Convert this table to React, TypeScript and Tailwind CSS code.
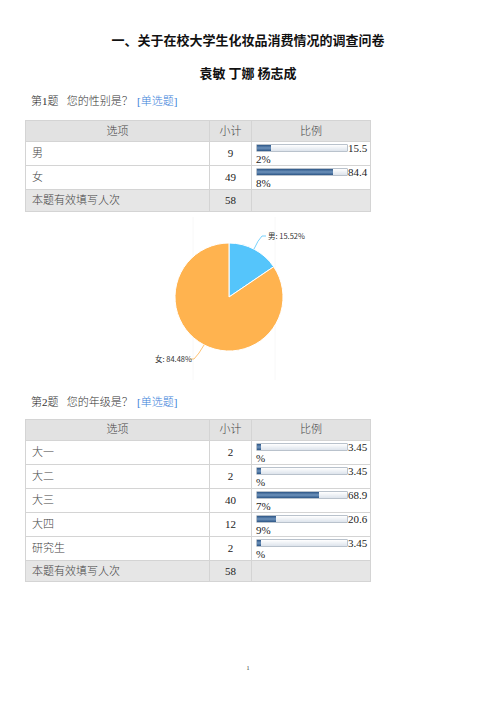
import React from 'react';

type Row = { label: string; count: number; pct: number; l1: string; l2: string };

const q1: Row[] = [
  { label: '男', count: 9, pct: 15.52, l1: '15.5', l2: '2%' },
  { label: '女', count: 49, pct: 84.48, l1: '84.4', l2: '8%' },
];

const q2: Row[] = [
  { label: '大一', count: 2, pct: 3.45, l1: '3.45', l2: '%' },
  { label: '大二', count: 2, pct: 3.45, l1: '3.45', l2: '%' },
  { label: '大三', count: 40, pct: 68.97, l1: '68.9', l2: '7%' },
  { label: '大四', count: 12, pct: 20.69, l1: '20.6', l2: '9%' },
  { label: '研究生', count: 2, pct: 3.45, l1: '3.45', l2: '%' },
];

const serif = { fontFamily: '"Liberation Serif", "Noto Sans CJK SC", serif' };

function Bar({ pct }: { pct: number }) {
  return (
    <div className="w-[92px] h-[8px] border border-[#b9c2cc] bg-gradient-to-b from-white to-[#dde4ec] rounded-[1px] overflow-hidden">
      {/* 进度条宽度来自数据 */}
      <div
        className="h-full bg-gradient-to-b from-[#2d5686] via-[#6d92bb] to-[#2d5686]"
        style={{ width: `${Math.max(pct, 4)}%` }}
      />
    </div>
  );
}

function QuestionTable({ rows, total }: { rows: Row[]; total: number }) {
  return (
    <table className="w-[346px] border-collapse text-[11px] text-[#444] font-light" style={serif}>
      <thead>
        <tr className="bg-[#e2e2e2] h-[21px]">
          <th className="border border-[#d4d4d4] w-[184px] font-light text-[#444]">选项</th>
          <th className="border border-[#d4d4d4] w-[42px] font-light text-[#444]">小计</th>
          <th className="border border-[#d4d4d4] font-light text-[#444]">比例</th>
        </tr>
      </thead>
      <tbody>
        {rows.map((r) => (
          <tr key={r.label} className="h-[23.5px]">
            <td className="border border-[#d4d4d4] pl-[6px]">{r.label}</td>
            <td className="border border-[#d4d4d4] text-center font-normal text-[#222]">{r.count}</td>
            <td className="border border-[#d4d4d4] pl-[4px] align-top font-normal">
              <div className="flex items-start leading-[11px] pt-[1px]">
                <div className="pt-[1px]">
                  <Bar pct={r.pct} />
                </div>
                <span className="text-[#222]">{r.l1}</span>
              </div>
              <div className="leading-[11px] text-[#222]">{r.l2}</div>
            </td>
          </tr>
        ))}
        <tr className="bg-[#e6e6e6] h-[21.5px]">
          <td className="border border-[#d4d4d4] pl-[6px]">本题有效填写人次</td>
          <td className="border border-[#d4d4d4] text-center font-normal text-[#222]">{total}</td>
          <td className="border border-[#d4d4d4]"></td>
        </tr>
      </tbody>
    </table>
  );
}

function QuestionTitle({ n, text }: { n: number; text: string }) {
  return (
    <div className="flex text-[11px] text-[#333] leading-[14px] font-light" style={serif}>
      <span className="w-[106px]">
        第{n}题&nbsp;&nbsp;&nbsp;{text}
      </span>
      <span className="text-[#3b7fd9]">[单选题]</span>
    </div>
  );
}

function PieChart() {
  const cx = 229;
  const cy = 85;
  const r = 54;
  const a = (15.52 / 100) * Math.PI * 2;
  const ex = cx + r * Math.sin(a);
  const ey = cy - r * Math.cos(a);
  return (
    <svg width="496" height="170" className="block -ml-[25px]">
      <line x1="193" y1="5" x2="193" y2="168" stroke="#f8f8f8" strokeWidth="1" />
      <line x1="275" y1="5" x2="275" y2="168" stroke="#f8f8f8" strokeWidth="1" />
      <path d={`M${cx} ${cy} L${cx} ${cy - r} A${r} ${r} 0 0 1 ${ex} ${ey} Z`} fill="#55c5fb" stroke="#fff" strokeWidth="1" />
      <path d={`M${cx} ${cy} L${ex} ${ey} A${r} ${r} 0 1 1 ${cx} ${cy - r} Z`} fill="#ffb34f" stroke="#fff" strokeWidth="1" />
      <path d="M254 37 Q258 28 262 24 L266 24" fill="none" stroke="#55c5fb" strokeWidth="0.8" />
      <path d="M204 133 Q199 142 194 147 L190 147" fill="none" stroke="#ffb34f" strokeWidth="0.8" />
      <text x="268" y="27" fontSize="7.5" fill="#333" fontFamily="'Noto Sans CJK SC', sans-serif">男: 15.52%</text>
      <text x="155" y="150" fontSize="7.5" fill="#333" fontFamily="'Noto Sans CJK SC', sans-serif">女: 84.48%</text>
    </svg>
  );
}

export default function App() {
  return (
    <div className="w-[496px] h-[702px] bg-white relative">
      <div className="pt-[32px] text-center text-[13px] font-bold text-[#111] leading-[16px]" style={{ fontFamily: '"Noto Sans CJK SC", sans-serif' }}>
        一、关于在校大学生化妆品消费情况的调查问卷
      </div>
      <div className="mt-[17px] text-center text-[13px] font-bold text-[#111] leading-[16px]" style={{ fontFamily: '"Noto Sans CJK SC", sans-serif' }}>
        袁敏 丁娜 杨志成
      </div>

      <div className="pl-[31px] mt-[13px]">
        <QuestionTitle n={1} text="您的性别是？" />
      </div>
      <div className="pl-[25px] mt-[12px]">
        <QuestionTable rows={q1} total={58} />
        <PieChart />
      </div>

      <div className="pl-[31px] mt-[13px]">
        <QuestionTitle n={2} text="您的年级是？" />
      </div>
      <div className="pl-[25px] mt-[10px]">
        <QuestionTable rows={q2} total={58} />
      </div>

      <div className="absolute left-0 right-0 top-[664px] text-center text-[6px] text-[#333]" style={serif}>
        1
      </div>
    </div>
  );
}
